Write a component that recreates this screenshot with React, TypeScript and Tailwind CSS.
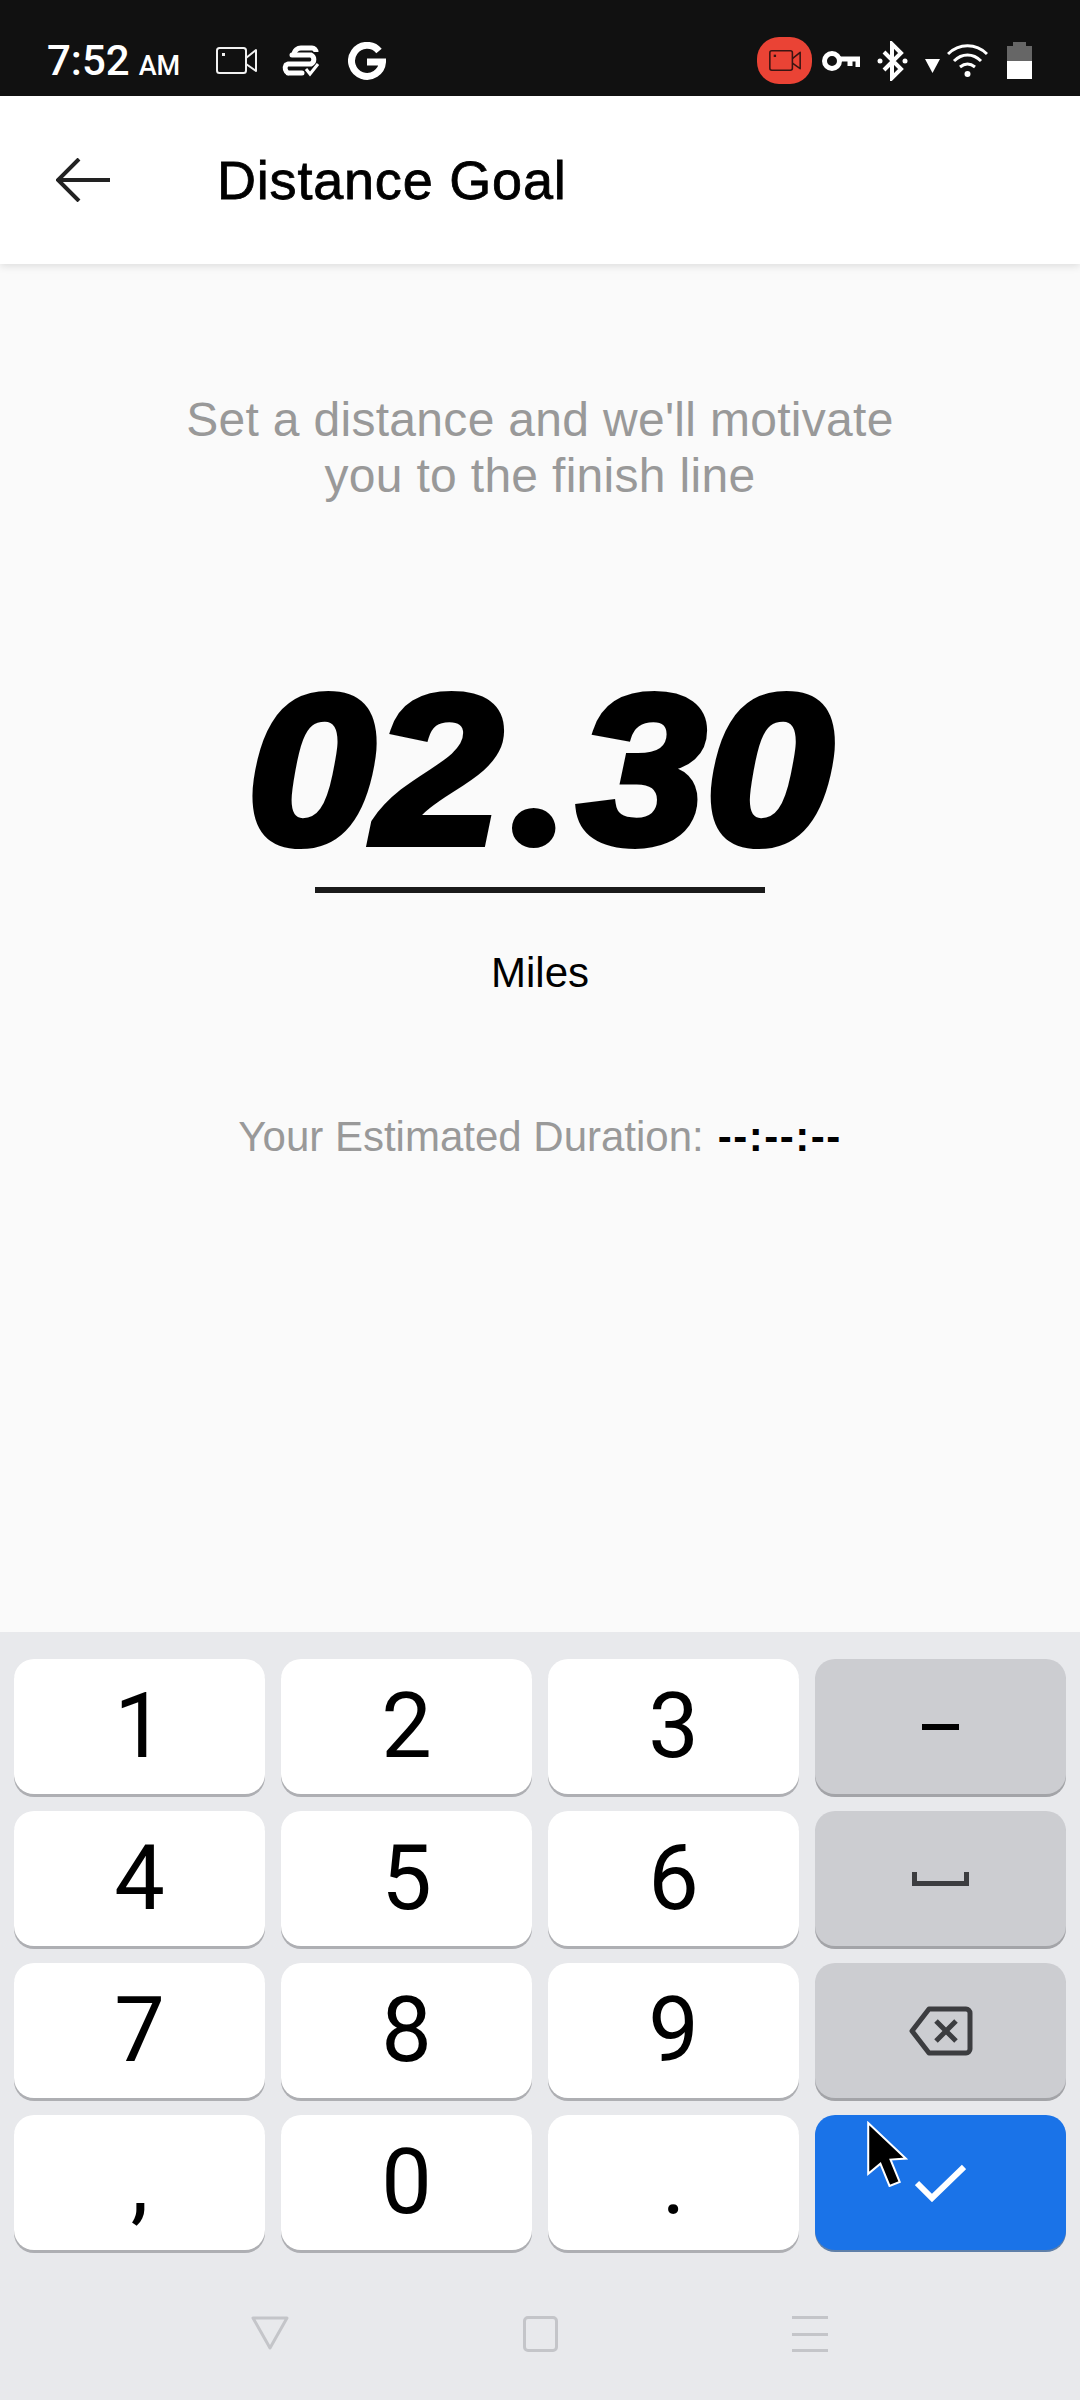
const rows = [
  ['1', '2', '3'],
  ['4', '5', '6'],
  ['7', '8', '9'],
  [',', '0', '.'],
]

function Key({ label }: { label: string }) {
  return (
    <div className="flex h-[135px] items-center justify-center rounded-[20px] bg-white text-[90px] leading-none text-black shadow-[0_3px_0_#aeafb3]">
      {label}
    </div>
  )
}

function SideKey({ children, blue }: { children: React.ReactNode; blue?: boolean }) {
  return (
    <div
      className={
        blue
          ? 'relative flex h-[135px] items-center justify-center rounded-[20px] bg-[#1a73e8] shadow-[0_2px_0_#5f7fa8]'
          : 'flex h-[135px] items-center justify-center rounded-[20px] bg-[#cccdd1] shadow-[0_3px_0_#a3a4a8]'
      }
    >
      {children}
    </div>
  )
}

function CameraIcon({ color, className }: { color: string; className: string }) {
  return (
    <svg viewBox="0 0 41 27" className={className} fill="none" stroke={color} strokeWidth="2">
      <rect x="1" y="1" width="29" height="25" rx="2.5" />
      <path d="M30 11 L40 3 V24 L30 17" strokeLinejoin="round" />
      <rect x="6" y="6" width="3" height="3" fill={color} stroke="none" />
    </svg>
  )
}

function StatusBar() {
  return (
    <div className="flex h-[96px] items-center justify-between bg-[#111111] pl-[47px] pr-[48px] pt-[25px] text-white">
      <div className="flex items-center">
        <div className="flex w-[169px] items-baseline font-['Roboto',sans-serif] font-medium">
          <span className="text-[42px] leading-none">7:52</span>
          <span className="ml-[9px] text-[27px] leading-none">AM</span>
        </div>
        <CameraIcon color="#f2f2f2" className="h-[27px] w-[41px]" />
        <svg viewBox="0 0 40 32" className="ml-[25px] h-[32px] w-[40px]" fill="none" stroke="white" strokeWidth="5">
          <path d="M10 10 H29 a5 5 0 0 1 0 9 H6" strokeLinecap="round" />
          <path d="M34 7 a4 4 0 0 0 -4 -4 H20 a7 7 0 0 0 -8 7" />
          <path d="M6 28 H20 M4 20 a6 6 0 0 0 2 8" strokeLinecap="round" />
          <path d="M24 24 L28 29 L36 19" strokeWidth="3" />
        </svg>
        <svg viewBox="0 0 38 38" className="ml-[26px] h-[38px] w-[38px]" fill="none" stroke="white" strokeWidth="7">
          <path d="M31 9 A15.5 15.5 0 1 0 34.5 20 H19" />
        </svg>
      </div>
      <div className="flex items-center">
        <div className="flex h-[47px] w-[55px] items-center justify-center rounded-[22px] bg-[#ea4335]">
          <CameraIcon color="#3a1512" className="h-[21px] w-[34px]" />
        </div>
        <svg viewBox="0 0 38 20" className="ml-[10px] h-[20px] w-[38px]" fill="none" stroke="white" strokeWidth="5">
          <circle cx="10" cy="10" r="7.5" />
          <path d="M18 8 H36 V16 M28 8 V15" />
        </svg>
        <svg viewBox="0 0 31 40" className="ml-[17px] h-[40px] w-[31px]" fill="none" stroke="white" strokeWidth="4">
          <path d="M7 11 L24 28 L15 37 V3 L24 12 L7 29" />
          <circle cx="3" cy="20" r="2.5" fill="white" stroke="none" />
          <circle cx="28" cy="20" r="2.5" fill="white" stroke="none" />
        </svg>
        <svg viewBox="0 0 15 14" className="ml-[17px] mt-[10px] h-[14px] w-[15px]" fill="white">
          <path d="M0 0 H15 L7.5 14 Z" />
        </svg>
        <svg viewBox="0 0 41 34" className="ml-[7px] h-[34px] w-[41px]" fill="none" stroke="white" strokeWidth="3">
          <path d="M1 10 C12 -1 29 -1 40 10" />
          <path d="M7 17 C15 9 26 9 34 17" />
          <path d="M13 23 C18 19 23 19 28 23" />
          <circle cx="20.5" cy="30" r="3" fill="white" stroke="none" />
        </svg>
        <div className="ml-[19px] flex w-[25px] flex-col items-center">
          <div className="h-[4px] w-[13px] bg-[#666666]" />
          <div className="h-[15px] w-[25px] bg-[#666666]" />
          <div className="h-[18px] w-[25px] bg-white" />
        </div>
      </div>
    </div>
  )
}

export default function App() {
  return (
    <div className="flex h-[2400px] w-[1080px] flex-col overflow-hidden bg-[#fafafa] font-['Liberation_Sans',sans-serif]">
      <StatusBar />

      <div className="z-10 flex h-[168px] items-center bg-white pl-[56px] shadow-[0_2px_8px_rgba(0,0,0,0.12)]">
        <svg viewBox="0 0 54 44" className="h-[44px] w-[54px]" fill="none" stroke="#222222" strokeWidth="4">
          <path d="M54 22 H2 M23 1 L2 22 L23 43" />
        </svg>
        <h1 className="ml-[107px] text-[54px] font-normal tracking-[0.8px] text-black [-webkit-text-stroke:0.8px_black]">Distance Goal</h1>
      </div>

      <main className="flex flex-1 flex-col items-center pt-[128px]">
        <p className="text-center text-[48px] leading-[56px] tracking-[0.3px] text-[#999999]">
          Set a distance and we'll motivate
          <br />
          you to the finish line
        </p>
        <div className="mt-[148px] h-[218px] scale-x-[1.08] text-[212px] font-bold italic leading-[218px] text-black [-webkit-text-stroke:8px_black]">
          02<span className="mx-[10px] font-['Lato',sans-serif]">.</span>30
        </div>
        <div className="mt-[17px] h-[6px] w-[450px] bg-[#1a1a1a]" />
        <div className="mt-[56px] text-[42px] leading-[48px] text-black">Miles</div>
        <div className="mt-[116px] flex items-center gap-[14px] text-[42px] leading-[48px] text-[#999999]">
          <span>Your Estimated Duration:</span>
          <span className="font-bold tracking-[1.5px] text-black">--:--:--</span>
        </div>
      </main>

      <div className="h-[768px] bg-[#e8e9ec] px-[14px] pt-[27px]">
        <div className="grid grid-cols-4 gap-x-[16px] gap-y-[17px] font-['Roboto',sans-serif]">
          {rows.map((row, i) => (
            <div key={i} className="contents">
              {row.map((label) => (
                <Key key={label} label={label} />
              ))}
              {i === 0 && (
                <SideKey>
                  <div className="h-[6px] w-[37px] bg-black" />
                </SideKey>
              )}
              {i === 1 && (
                <SideKey>
                  <svg viewBox="0 0 57 14" className="h-[14px] w-[57px]" fill="none" stroke="#3c3d40" strokeWidth="5">
                    <path d="M2.5 0 V11.5 H54.5 V0" />
                  </svg>
                </SideKey>
              )}
              {i === 2 && (
                <SideKey>
                  <svg viewBox="0 0 64 50" className="h-[50px] w-[64px]" fill="none" stroke="#3c3d40" strokeWidth="5" strokeLinejoin="round">
                    <path d="M20 3 H57 a4 4 0 0 1 4 4 V43 a4 4 0 0 1 -4 4 H20 L3 25 Z" />
                    <path d="M27 15 L47 35 M47 15 L27 35" />
                  </svg>
                </SideKey>
              )}
              {i === 3 && (
                <SideKey blue>
                  <svg viewBox="0 0 51 38" className="h-[38px] w-[51px]" fill="none" stroke="white" strokeWidth="6">
                    <path d="M2 19 L17 34 L49 3" />
                  </svg>
                  <svg viewBox="0 0 41 65" className="absolute left-[51px] top-[6px] h-[66px] w-[42px]" fill="black" stroke="white" strokeWidth="2">
                    <path d="M2 2 L39 37 L24 38 L33 60 L23 64 L14 42 L2 52 Z" />
                  </svg>
                </SideKey>
              )}
            </div>
          ))}
        </div>

        <div className="mt-[66px] flex items-start justify-center gap-[234px] pr-[2px]">
          <svg viewBox="0 0 38 34" className="h-[34px] w-[38px]" fill="none" stroke="#c4c5c9" strokeWidth="3" strokeLinejoin="round">
            <path d="M2 2 H36 L19 32 Z" />
          </svg>
          <div className="h-[36px] w-[35px] rounded-[5px] border-[3px] border-[#c4c5c9]" />
          <div className="flex h-[36px] w-[36px] flex-col justify-between">
            <div className="h-[3px] bg-[#c4c5c9]" />
            <div className="h-[3px] bg-[#c4c5c9]" />
            <div className="h-[3px] bg-[#c4c5c9]" />
          </div>
        </div>
      </div>
    </div>
  )
}
